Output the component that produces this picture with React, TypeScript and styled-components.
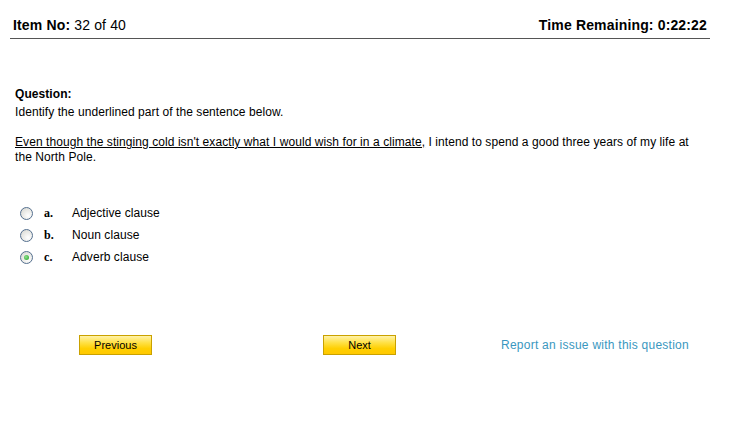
import React from "react";
import styled, { createGlobalStyle } from "styled-components";

const Global = createGlobalStyle`
  html, body { margin: 0; padding: 0; background: #fff; }
  body { font-family: "Liberation Sans", Arial, sans-serif; color: #000; }
`;

const Page = styled.div`
  width: 755px;
  height: 434px;
  box-sizing: border-box;
  padding: 16px 45px 0 10px;
`;

const Header = styled.div`
  display: flex;
  justify-content: space-between;
  align-items: baseline;
  border-bottom: 1px solid #555;
  padding: 0 3px 4px 3px;
  font-size: 14px;
  line-height: 18px;
  letter-spacing: 0.15px;
`;

const Label = styled.span`
  font-weight: bold;
`;

const Question = styled.section`
  padding: 48px 10px 0 5px;
  font-size: 12px;
  line-height: 15px;
  letter-spacing: 0.07px;
`;

const Heading = styled.div`
  font-weight: bold;
  margin-bottom: 3px;
`;

const Para = styled.p`
  margin: 0 0 15px 0;
`;

const Underlined = styled.span`
  text-decoration: underline;
`;

const Options = styled.ul`
  list-style: none;
  margin: 37px 0 0 0;
  padding: 0 0 0 9px;
`;

const Option = styled.li`
  display: flex;
  align-items: center;
  height: 22px;
  font-size: 12px;
  letter-spacing: 0.07px;
`;

const Radio = styled.span<{ $checked?: boolean }>`
  width: 13px;
  height: 13px;
  box-sizing: border-box;
  border-radius: 50%;
  border: 1px solid #55708f;
  background: radial-gradient(circle at 65% 70%, #ffffff 0%, #e6e6e2 60%, #d0d0cb 100%);
  display: flex;
  align-items: center;
  justify-content: center;
  margin-left: 1px;
  &::after {
    content: "";
    display: ${(p) => (p.$checked ? "block" : "none")};
    width: 5px;
    height: 5px;
    border-radius: 50%;
    background: radial-gradient(circle at 40% 40%, #8fe08f, #21a121);
  }
`;

const Letter = styled.span`
  font-family: "Liberation Serif", "Times New Roman", serif;
  font-weight: bold;
  font-size: 12px;
  width: 28px;
  margin-left: 11px;
`;

const Actions = styled.div`
  display: flex;
  align-items: center;
  margin-top: 67px;
  padding-left: 69px;
`;

const Button = styled.button`
  width: 73px;
  height: 20px;
  box-sizing: border-box;
  border: 1px solid #c9a100;
  background: linear-gradient(#fff2a8 0%, #ffe24a 35%, #ffcf00 70%, #ffc800 100%);
  font-family: "Liberation Sans", Arial, sans-serif;
  font-size: 11px;
  color: #000;
  padding: 0;
  cursor: pointer;
`;

const Spacer = styled.div<{ $w: number }>`
  width: ${(p) => p.$w}px;
  flex: none;
`;

const Link = styled.a`
  font-size: 12px;
  letter-spacing: 0.25px;
  color: #3a97c0;
  text-decoration: none;
  cursor: pointer;
`;

export default function App() {
  return (
    <>
      <Global />
      <Page>
        <Header>
          <span>
            <Label>Item No:</Label> 32 of 40
          </span>
          <Label>Time Remaining: 0:22:22</Label>
        </Header>
        <Question>
          <Heading>Question:</Heading>
          <Para>Identify the underlined part of the sentence below.</Para>
          <Para>
            <Underlined>Even though the stinging cold isn't exactly what I would wish for in a climate,</Underlined>{" "}
            I intend to spend a good three years of my life at the North Pole.
          </Para>
        </Question>
        <Options>
          <Option>
            <Radio />
            <Letter>a.</Letter>
            Adjective clause
          </Option>
          <Option>
            <Radio />
            <Letter>b.</Letter>
            Noun clause
          </Option>
          <Option>
            <Radio $checked />
            <Letter>c.</Letter>
            Adverb clause
          </Option>
        </Options>
        <Actions>
          <Button>Previous</Button>
          <Spacer $w={171} />
          <Button>Next</Button>
          <Spacer $w={105} />
          <Link>Report an issue with this question</Link>
        </Actions>
      </Page>
    </>
  );
}
